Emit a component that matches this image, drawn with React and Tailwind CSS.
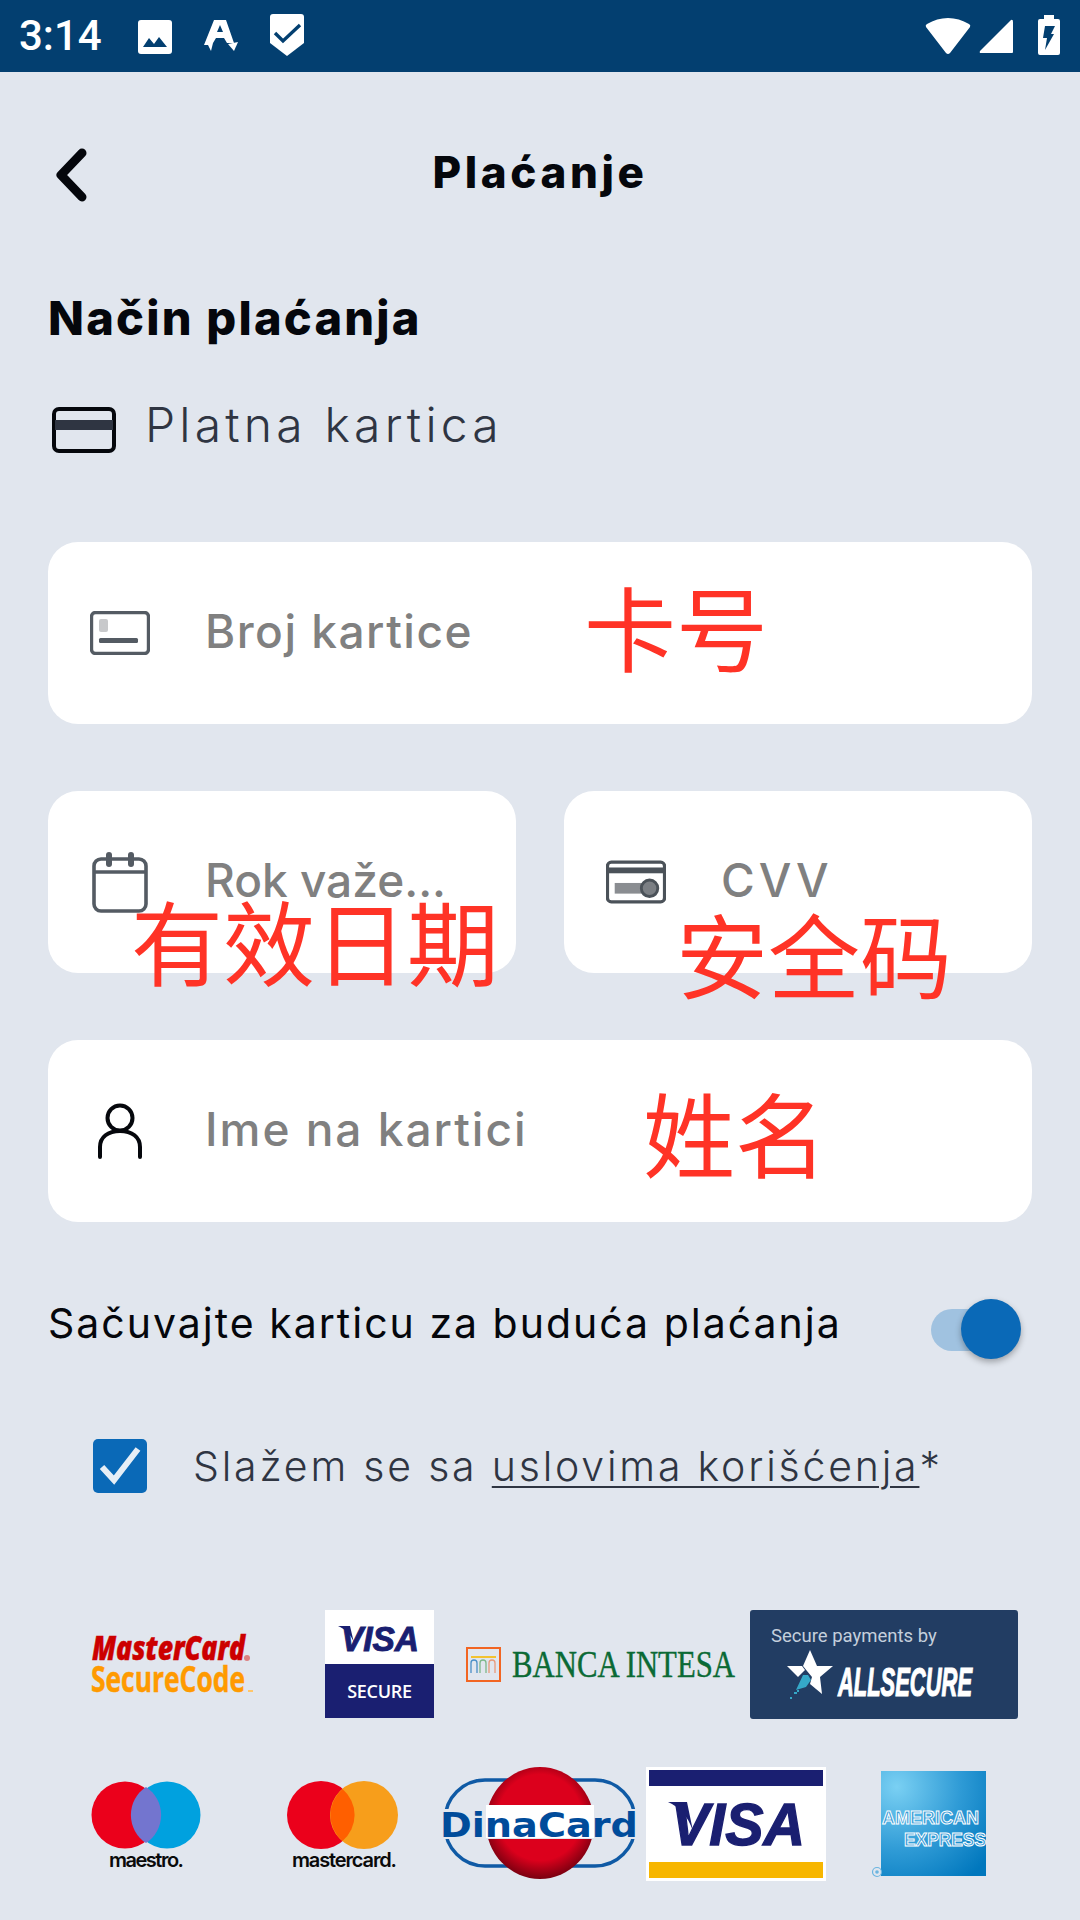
const Note = ({ className, children }) => (
  <span className={`absolute whitespace-nowrap font-['Noto_Sans_CJK_SC',sans-serif] text-[92px] leading-[92px] text-[#ff3326] ${className}`}>
    {children}
  </span>
)

function Field({ icon, label, className = '', labelClass = 'tracking-[1.5px]', children }) {
  return (
    <div className={`relative flex h-[182px] items-center rounded-[30px] bg-white pl-[42px] ${className}`}>
      <div className="flex w-[60px] shrink-0 justify-center">{icon}</div>
      <span className={`ml-[55px] -mt-[3px] whitespace-nowrap text-[46px] font-medium text-[#808080] ${labelClass}`}>{label}</span>
      {children}
    </div>
  )
}

const StatusIcons = () => (
  <>
    <svg width="34" height="36" viewBox="0 0 34 36" className="ml-[36px] mt-[2px]">
      <rect x="0" y="1" width="34" height="34" rx="3" fill="#fff" />
      <path d="M5 28 L11 19 L16 25 L21 18 L29 28 Z" fill="#033f70" />
    </svg>
    <svg width="36" height="36" viewBox="0 0 36 36" className="ml-[31px]">
      <path fill="#fff" fillRule="evenodd" d="M11 2 H23 L31 25 L24 25 L21 20 H13 L10 25 L8 33 L5 27 L1 27 Z M14 14 H20 L17 7 Z" />
      <path fill="#fff" d="M25 26 L35 24 L31 33 Z" />
    </svg>
    <svg width="34" height="42" viewBox="0 0 34 42" className="ml-[31px] -mt-[3px]">
      <path fill="#fff" d="M3 0 H31 Q34 0 34 3 V29 L17 42 L0 29 V3 Q0 0 3 0 Z" />
      <path fill="none" stroke="#033f70" strokeWidth="3.4" d="M5 19 L13 27 L30 11" />
    </svg>
  </>
)

const SystemIcons = () => (
  <>
    <svg width="46" height="38" viewBox="0 0 46 38">
      <path fill="#fff" d="M23 37 Q22 37 21 36 L1 10 Q0 8 2 7 Q12 1 23 1 Q34 1 44 7 Q46 8 45 10 L25 36 Q24 37 23 37 Z" />
    </svg>
    <svg width="35" height="35" viewBox="0 0 35 35" className="ml-[8px]">
      <path fill="#fff" d="M32 1 Q34 0 34 3 V33 Q34 34 33 34 H2 Q0 34 1 32 Z" />
    </svg>
    <svg width="22" height="40" viewBox="0 0 22 40" className="ml-[24px] -mt-[3px]">
      <path fill="#fff" d="M6 0 H16 V4 H20 Q22 4 22 6 V38 Q22 40 20 40 H2 Q0 40 0 38 V6 Q0 4 2 4 H6 Z" />
      <path fill="#033f70" d="M7 11 H17 L13 19 H16 L7 35 L9 23 H5 Z" />
    </svg>
  </>
)

const CardIcon = () => (
  <svg width="60" height="44" viewBox="0 0 60 44" fill="none">
    <rect x="1.5" y="1.5" width="57" height="41" rx="4" stroke="#545b63" strokeWidth="3.4" />
    <rect x="9" y="8" width="9" height="13" rx="2" fill="#c8c9cb" />
    <rect x="9" y="27" width="39" height="5" rx="1.5" fill="#545b63" />
  </svg>
)

const CalendarIcon = () => (
  <svg width="56" height="62" viewBox="0 0 56 62" fill="none">
    <rect x="2" y="8" width="52" height="52" rx="7" stroke="#545b63" strokeWidth="3.6" />
    <path d="M2 21 H54" stroke="#545b63" strokeWidth="3.6" />
    <rect x="14" y="1" width="6" height="15" rx="3" fill="#545b63" />
    <rect x="36" y="1" width="6" height="15" rx="3" fill="#545b63" />
  </svg>
)

const CvvIcon = () => (
  <svg width="62" height="44" viewBox="0 0 62 44" fill="none">
    <rect x="1.5" y="1.5" width="59" height="41" rx="4" stroke="#4b5259" strokeWidth="3.4" />
    <rect x="2" y="7" width="58" height="6" fill="#4b5259" />
    <rect x="9" y="23" width="36" height="11" fill="#8a8d91" />
    <circle cx="45" cy="28.5" r="8.5" fill="#7b7f84" stroke="#4b5259" strokeWidth="3" />
  </svg>
)

const PersonIcon = () => (
  <svg width="46" height="56" viewBox="0 0 46 56" fill="none" stroke="#05070c" strokeWidth="4" strokeLinecap="round">
    <circle cx="23" cy="15" r="12.5" />
    <path d="M3 54 V44 C3 34 11 28 23 28 C35 28 43 34 43 44 V54" />
  </svg>
)

const SecureCodeLogo = () => (
  <svg width="165" height="64" viewBox="0 0 165 64" className="font-['Open_Sans',sans-serif]">
    <text x="2" y="27" fontSize="34" fontWeight="800" fontStyle="italic" fill="#cc0000" stroke="#cc0000" strokeWidth="0.5" textLength="153" lengthAdjust="spacingAndGlyphs">MasterCard</text>
    <circle cx="157" cy="25" r="3" fill="#dc8080" />
    <text x="1" y="59" fontSize="35" fontWeight="700" fill="#ff9a00" stroke="#ff9a00" strokeWidth="0.5" textLength="154" lengthAdjust="spacingAndGlyphs">SecureCode</text>
    <rect x="158" y="57" width="5" height="2" fill="#ffc66b" />
  </svg>
)

const VisaSecureLogo = () => (
  <div className="-mt-[1px] flex h-[108px] w-[109px] flex-col bg-white">
    <div className="flex h-[54px] items-center justify-center">
      <svg width="84" height="32" viewBox="0 0 84 32">
        <path fill="#1a1f71" d="M0 5 H12 L16 22 C13 13 7 8 0 5 Z" />
        <text x="3" y="30" fontSize="35" fontWeight="700" fontStyle="italic" fill="#1a1f71" stroke="#1a1f71" strokeWidth="1" textLength="78" lengthAdjust="spacingAndGlyphs" className="font-['Liberation_Sans',sans-serif]">VISA</text>
      </svg>
    </div>
    <div className="flex h-[54px] items-center justify-center bg-[#1a1f71] font-['Open_Sans',sans-serif] text-[18px] font-semibold tracking-[-0.3px] text-white">SECURE</div>
  </div>
)

const BancaLogo = () => (
  <div className="flex items-center">
    <svg width="35" height="35" viewBox="0 0 35 35" fill="none">
      <rect x="1" y="1" width="33" height="33" stroke="#f26522" strokeWidth="2" />
      <path d="M5 10 H30" stroke="#f2c230" strokeWidth="2" />
      <path d="M5 26 V16 Q5 13 8 13 Q11 13 11 16 V26" stroke="#4a8fc7" strokeWidth="1.3" />
      <path d="M14 26 V16 Q14 13 17 13 Q20 13 20 16 V26" stroke="#7db88a" strokeWidth="1.3" />
      <path d="M23 26 V16 Q23 13 26 13 Q29 13 29 16 V26" stroke="#e89a7a" strokeWidth="1.3" />
    </svg>
    <svg width="224" height="32" viewBox="0 0 224 32" className="ml-[11px] font-['Liberation_Serif',serif]">
      <text x="0" y="28" fontSize="38" fill="#0b6a35" stroke="#0b6a35" strokeWidth="0.4" textLength="223" lengthAdjust="spacingAndGlyphs">BANCA INTESA</text>
    </svg>
  </div>
)

const AllSecureLogo = () => (
  <div className="flex h-[109px] w-[268px] flex-col rounded-[3px] bg-[#223d63] pl-[21px] pt-[14px]">
    <span className="font-['Roboto',sans-serif] text-[18.5px] leading-[24px] text-[#c4cfdc]">Secure payments by</span>
    <svg width="205" height="56" viewBox="0 0 205 56" className="-mt-[2px]">
      <path fill="#fff" d="M39 4 L46 20 L62 20 L49 31 L51 48 L39 38 L41 31 L36 25 L32 20 Z" />
      <path fill="#fff" d="M16 20 H31 L34 24 L27 31 Z" />
      <path fill="#35a8c8" d="M32 29 L37 29 L40 34 L35 41 L25 44 Z" />
      <path fill="#35a8c8" d="M23 46 h3 v2 h-3 z M19 51 h2 v2 h-2 z M26 44 h2 v2 h-2 z" />
      <text x="67" y="50" fontSize="40" fontWeight="700" fontStyle="italic" fill="#fff" stroke="#fff" strokeWidth="1.2" textLength="134" lengthAdjust="spacingAndGlyphs" className="font-['Liberation_Sans',sans-serif]">ALLSECURE</text>
    </svg>
  </div>
)

const MaestroLogo = () => (
  <svg width="112" height="90" viewBox="0 0 112 90" className="font-['Inter',sans-serif]">
    <circle cx="34" cy="34" r="33.5" fill="#eb001b" />
    <circle cx="76" cy="34" r="33.5" fill="#00a1df" />
    <path fill="#7375cf" d="M55 6 A33.5 33.5 0 0 1 55 62 A33.5 33.5 0 0 1 55 6 Z" />
    <text x="18" y="86" fontSize="20" fontWeight="600" fill="#0a0a0a" textLength="75" lengthAdjust="spacing">maestro.</text>
  </svg>
)

const MastercardLogo = () => (
  <svg width="114" height="90" viewBox="0 0 114 90" className="font-['Inter',sans-serif]">
    <circle cx="35" cy="34" r="34" fill="#eb001b" />
    <circle cx="78" cy="34" r="34" fill="#f79e1b" />
    <path fill="#ff5f00" d="M56.5 8 A34 34 0 0 1 56.5 60 A34 34 0 0 1 56.5 8 Z" />
    <text x="6" y="86" fontSize="20" fontWeight="600" fill="#0a0a0a" textLength="105" lengthAdjust="spacing">mastercard.</text>
  </svg>
)

const DinaCardLogo = () => (
  <svg width="198" height="114" viewBox="0 0 198 114" className="font-['DejaVu_Sans',sans-serif]">
    <defs>
      <radialGradient id="ball" cx="50%" cy="45%" r="55%">
        <stop offset="70%" stopColor="#dc001c" />
        <stop offset="100%" stopColor="#7a0010" />
      </radialGradient>
    </defs>
    <rect x="4" y="13" width="190" height="86" rx="40" fill="none" stroke="#0f5aa5" strokeWidth="3.4" />
    <ellipse cx="99" cy="56" rx="54" ry="56" fill="url(#ball)" />
    <rect x="0" y="42" width="198" height="30" fill="#e1e6ee" />
    <rect x="45" y="38" width="108" height="33" fill="#fff" />
    <text x="-1" y="70" fontSize="33" fontWeight="700" fill="#004c9b" textLength="198" lengthAdjust="spacingAndGlyphs">DinaCard</text>
  </svg>
)

const VisaCardLogo = () => (
  <div className="flex h-[114px] w-[180px] flex-col justify-between bg-white p-[3px]">
    <div className="h-[16px] bg-[#1a1f71]" />
    <svg width="174" height="50" viewBox="0 0 174 50">
      <path fill="#1a1f71" d="M19 3 H38 L44 32 C39 17 30 8 19 3 Z" />
      <text x="22" y="46" fontSize="60" fontWeight="700" fontStyle="italic" fill="#1a1f71" stroke="#1a1f71" strokeWidth="1.4" textLength="134" lengthAdjust="spacingAndGlyphs" className="font-['Liberation_Sans',sans-serif]">VISA</text>
    </svg>
    <div className="h-[16px] bg-[#f7b600]" />
  </div>
)

const AmexLogo = () => (
  <svg width="115" height="108" viewBox="0 0 115 108" className="font-['Liberation_Sans',sans-serif]">
    <defs>
      <radialGradient id="amex" cx="15%" cy="15%" r="110%">
        <stop offset="0%" stopColor="#7ad0f3" />
        <stop offset="55%" stopColor="#2f9bd6" />
        <stop offset="100%" stopColor="#0077bd" />
      </radialGradient>
    </defs>
    <rect x="9" y="1" width="105" height="105" fill="url(#amex)" />
    <text x="10" y="54" fontSize="19" fontWeight="700" fill="#3a9ad6" stroke="#fff" strokeWidth="1" textLength="97" lengthAdjust="spacingAndGlyphs">AMERICAN</text>
    <text x="32" y="76" fontSize="19" fontWeight="700" fill="#3a9ad6" stroke="#fff" strokeWidth="1" textLength="82" lengthAdjust="spacingAndGlyphs">EXPRESS</text>
    <circle cx="5" cy="102" r="4.5" fill="none" stroke="#6cb5e0" strokeWidth="1.2" />
    <circle cx="5" cy="102" r="1.8" fill="#6cb5e0" />
  </svg>
)

export default function App() {
  return (
    <div className="flex min-h-[1920px] w-[1080px] flex-col overflow-hidden bg-[#e1e6ee] font-['Inter',sans-serif]">
      {/* Status bar */}
      <div className="flex h-[72px] items-center justify-between bg-[#033f70] pl-[19px] pr-[20px]">
        <div className="flex items-center">
          <span className="font-['Roboto',sans-serif] text-[42px] font-medium leading-none text-white">3:14</span>
          <StatusIcons />
        </div>
        <div className="flex items-center">
          <SystemIcons />
        </div>
      </div>

      <div className="flex flex-col px-[48px]">
        {/* Header */}
        <div className="mt-[70px] grid h-[60px] grid-cols-[1fr_auto_1fr] grid-rows-[60px] items-center">
          <svg width="34" height="58" viewBox="0 0 34 58" fill="none" className="ml-[7px] mt-[4px] self-start">
            <path d="M27 7 L6 29 L27 51" stroke="#05070c" strokeWidth="9" strokeLinecap="round" strokeLinejoin="round" />
          </svg>
          <h1 className="text-[44px] font-extrabold leading-[60px] tracking-[3.6px] text-[#05070c]">Plaćanje</h1>
          <div />
        </div>

        <h2 className="mt-[86px] text-[47px] font-extrabold leading-[60px] tracking-[2.2px] text-[#05070c]">Način plaćanja</h2>

        <div className="mt-[47px] flex h-[60px] items-center">
          <svg width="64" height="46" viewBox="0 0 64 46" fill="none" className="ml-[4px] mt-[10px] shrink-0">
            <rect x="2" y="2" width="60" height="42" rx="5" stroke="#05070c" strokeWidth="4" />
            <rect x="3" y="13" width="58" height="10" fill="#2f3542" />
          </svg>
          <span className="ml-[29px] text-[48px] font-light tracking-[4.2px] text-[#2f3542]">Platna kartica</span>
        </div>

        {/* Card form */}
        <Field className="mt-[87px]" icon={<CardIcon />} label="Broj kartice">
          <Note className="left-[536px] top-[37px]">卡号</Note>
        </Field>

        <div className="mt-[67px] grid grid-cols-2 gap-[48px]">
          <Field icon={<CalendarIcon />} label="Rok važe..." labelClass="tracking-normal">
            <Note className="left-[83px] top-[102px]">有效日期</Note>
          </Field>
          <Field icon={<CvvIcon />} label="CVV" labelClass="tracking-[4px]">
            <Note className="left-[112px] top-[115px]">安全码</Note>
          </Field>
        </div>

        <Field className="mt-[67px]" icon={<PersonIcon />} label="Ime na kartici" labelClass="tracking-[2px]">
          <Note className="left-[595px] top-[45px]">姓名</Note>
        </Field>

        {/* Save card */}
        <div className="mt-[77px] flex h-[62px] items-center justify-between pr-[9px]">
          <span className="-mt-[12px] text-[41px] tracking-[2px] text-[#05070c]">Sačuvajte karticu za buduća plaćanja</span>
          <div className="relative h-[62px] w-[92px] shrink-0">
            <div className="absolute left-0 top-[10px] h-[42px] w-[80px] rounded-full bg-[#a0c2e0]" />
            <div className="absolute right-[2px] top-0 h-[60px] w-[60px] rounded-full bg-[#0a69b7] shadow-[0_3px_6px_rgba(0,0,0,0.3)]" />
          </div>
        </div>

        {/* Terms */}
        <div className="mt-[78px] flex h-[54px] items-center pl-[45px]">
          <div className="flex h-[54px] w-[54px] shrink-0 items-center justify-center rounded-[5px] bg-[#0a69b7]">
            <svg width="44" height="44" viewBox="0 0 44 44" fill="none">
              <path d="M4 23 L16 36 L40 5" stroke="#e6eef6" strokeWidth="6" />
            </svg>
          </div>
          <span className="ml-[46px] mt-[2px] text-[41px] font-light tracking-[2.8px] text-[#2f3542]">
            Slažem se sa <span className="underline decoration-2 underline-offset-[5px]">uslovima korišćenja</span>*
          </span>
        </div>
      </div>

      {/* Payment logos */}
      <div className="mt-[117px] flex h-[109px] items-center pl-[90px]">
        <SecureCodeLogo />
        <div className="ml-[70px]"><VisaSecureLogo /></div>
        <div className="ml-[32px]"><BancaLogo /></div>
        <div className="ml-[14px]"><AllSecureLogo /></div>
      </div>
      <div className="mt-[48px] flex h-[114px] items-start pl-[91px]">
        <div className="mt-[14px]"><MaestroLogo /></div>
        <div className="ml-[83px] mt-[14px]"><MastercardLogo /></div>
        <div className="ml-[41px]"><DinaCardLogo /></div>
        <div className="ml-[7px]"><VisaCardLogo /></div>
        <div className="ml-[46px] mt-[3px]"><AmexLogo /></div>
      </div>
    </div>
  )
}
